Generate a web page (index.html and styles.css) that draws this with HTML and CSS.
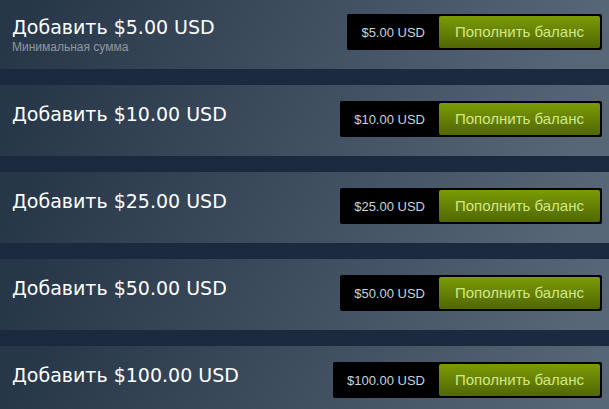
FILE: index.html
```html
<!DOCTYPE html>
<html lang="ru">
<head>
    <meta charset="UTF-8">
    <title>Пополнить баланс</title>
    <link rel="stylesheet" href="styles.css">
</head>
<body>
    <div class="funds-list">
        <div class="funds-row">
            <div class="funds-info">
                <h1>Добавить $5.00 USD</h1>
                <div class="funds-note">Минимальная сумма</div>
            </div>
            <div class="funds-action">
                <span class="funds-price">$5.00 USD</span>
                <a class="btn-add" href="#">Пополнить баланс</a>
            </div>
        </div>
        <div class="funds-row">
            <div class="funds-info">
                <h1>Добавить $10.00 USD</h1>
            </div>
            <div class="funds-action">
                <span class="funds-price">$10.00 USD</span>
                <a class="btn-add" href="#">Пополнить баланс</a>
            </div>
        </div>
        <div class="funds-row">
            <div class="funds-info">
                <h1>Добавить $25.00 USD</h1>
            </div>
            <div class="funds-action">
                <span class="funds-price">$25.00 USD</span>
                <a class="btn-add" href="#">Пополнить баланс</a>
            </div>
        </div>
        <div class="funds-row">
            <div class="funds-info">
                <h1>Добавить $50.00 USD</h1>
            </div>
            <div class="funds-action">
                <span class="funds-price">$50.00 USD</span>
                <a class="btn-add" href="#">Пополнить баланс</a>
            </div>
        </div>
        <div class="funds-row">
            <div class="funds-info">
                <h1>Добавить $100.00 USD</h1>
            </div>
            <div class="funds-action">
                <span class="funds-price">$100.00 USD</span>
                <a class="btn-add" href="#">Пополнить баланс</a>
            </div>
        </div>
    </div>
</body>
</html>
```

FILE: styles.css
```css
body {
    margin: 0;
    background: #1b2a3e;
    font-family: Arial, "Liberation Sans", sans-serif;
    overflow: hidden;
}
.funds-list {
    margin-top: -2px;
}
.funds-row {
    display: flex;
    justify-content: space-between;
    align-items: flex-start;
    height: 71px;
    box-sizing: border-box;
    padding: 16px 7px 0 12px;
    margin-bottom: 16px;
    background: linear-gradient(-60deg, rgba(226, 244, 255, 0.3) 5%, rgba(84, 107, 115, 0.2) 95%);
}
.funds-info h1 {
    margin: 0;
    font-family: "DejaVu Sans", sans-serif;
    font-size: 19px;
    font-weight: normal;
    line-height: 26px;
    color: #ffffff;
}
.funds-note {
    font-size: 12px;
    line-height: 14px;
    color: #8f98a0;
}
.funds-action {
    display: flex;
    align-items: center;
    background: #000000;
    border-radius: 2px;
    padding: 2px 2px 2px 14px;
}
.funds-price {
    font-size: 13px;
    color: #c6d4df;
    margin-right: 14px;
}
.btn-add {
    display: block;
    width: 161px;
    height: 32px;
    line-height: 32px;
    text-align: center;
    font-size: 15px;
    color: #d2e885;
    text-decoration: none;
    border-radius: 2px;
    background: linear-gradient(to bottom, #799905 5%, #536904 95%);
}
```
